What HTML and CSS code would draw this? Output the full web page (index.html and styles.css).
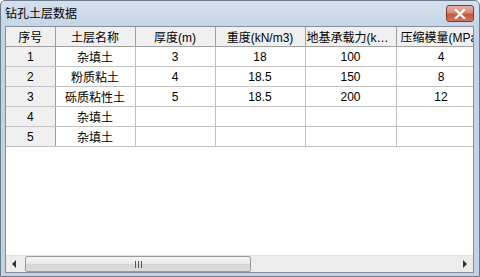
FILE: index.html
```
<!DOCTYPE html>
<html lang="zh-CN">
<head>
    <meta charset="UTF-8">
    <title>钻孔土层数据</title>
    <link rel="stylesheet" href="styles.css">
</head>
<body>
    <div class="window">
        <div class="titlebar">
            <span class="title">钻孔土层数据</span>
            <div class="close">
                <svg width="12" height="10" viewBox="0 0 12 10">
                    <path d="M2 1 L10 9 M10 1 L2 9" stroke="#fff" stroke-width="2.4" stroke-linecap="square"/>
                </svg>
            </div>
        </div>
        <div class="client">
            <div class="grid">
                <table>
                    <colgroup>
                        <col style="width:49px"><col style="width:80px"><col style="width:80px">
                        <col style="width:90px"><col style="width:91px"><col style="width:90px">
                    </colgroup>
                    <tr class="head">
                        <th>序号</th><th>土层名称</th><th>厚度(m)</th><th>重度(kN/m3)</th><th>地基承载力(kPa)</th><th class="clip">压缩模量(MPa)</th>
                    </tr>
                    <tr><td class="num">1</td><td>杂填土</td><td>3</td><td>18</td><td>100</td><td>4</td></tr>
                    <tr><td class="num">2</td><td>粉质粘土</td><td>4</td><td>18.5</td><td>150</td><td>8</td></tr>
                    <tr><td class="num">3</td><td>砾质粘性土</td><td>5</td><td>18.5</td><td>200</td><td>12</td></tr>
                    <tr><td class="num">4</td><td>杂填土</td><td></td><td></td><td></td><td></td></tr>
                    <tr><td class="num">5</td><td>杂填土</td><td></td><td></td><td></td><td></td></tr>
                </table>
            </div>
            <div class="hscroll">
                <div class="arrow left"></div>
                <div class="track">
                    <div class="thumb"><span class="grip"></span></div>
                </div>
                <div class="arrow right"></div>
            </div>
        </div>
    </div>
</body>
</html>
```

FILE: styles.css
```
html, body { margin: 0; padding: 0; }
body { width: 480px; height: 277px; overflow: hidden; font-family: "Liberation Sans", "Noto Sans CJK SC", sans-serif; font-size: 12px; color: #000; }

.window {
    width: 480px; height: 277px; box-sizing: border-box;
    border: 1px solid #6d7b8b; border-radius: 5px 5px 0 0;
    background: linear-gradient(#d3e0ee, #c4d4e6 30px, #c2d2e4);
    display: flex; flex-direction: column;
}
.titlebar { height: 25px; flex: none; display: flex; align-items: flex-start; padding-left: 4px; position: relative; }
.title { font-family: "Noto Sans CJK SC", sans-serif; font-size: 12px; line-height: 12px; margin-top: 6px; color: #000; }
.close {
    position: absolute; right: 5px; top: 4px; width: 28px; height: 17px; box-sizing: border-box;
    border: 1px solid #7a3a30; border-radius: 3px;
    background: linear-gradient(#e8b2a6, #d88a78 45%, #c5563f 55%, #cf7560);
    display: flex; align-items: center; justify-content: center;
}

.client {
    flex: 1; margin: 0 5px 3px 4px; border: 1px solid #838f9c; background: #fff;
    display: flex; flex-direction: column; overflow: hidden;
}
.grid { flex: 1; overflow: hidden; }
table { border-collapse: collapse; table-layout: fixed; width: 480px; }
th, td {
    height: 19px; padding: 0 1px; border: 1px solid #c2c2c2; border-top: none; border-left: none;
    text-align: center; white-space: nowrap; overflow: hidden; font-weight: normal;
    font-family: "Liberation Sans", "Noto Sans CJK SC", sans-serif; font-size: 12px;
}
th { background: #f0f0f0; border-color: #a0a0a0; text-overflow: ellipsis; }
th.clip { text-overflow: clip; text-align: left; padding-left: 4px; }
td.num { background: #f0f0f0; border-right-color: #a0a0a0; }

.hscroll { height: 16px; flex: none; display: flex; background: #ececec; border-top: 1px solid #e2e2e2; }
.arrow { width: 17px; position: relative; }
.arrow.left::after {
    content: ""; position: absolute; left: 6px; top: 4px;
    border-right: 4px solid #333; border-top: 4px solid transparent; border-bottom: 4px solid transparent;
}
.arrow.right::after {
    content: ""; position: absolute; right: 6px; top: 4px;
    border-left: 4px solid #333; border-top: 4px solid transparent; border-bottom: 4px solid transparent;
}
.track { flex: 1; display: flex; padding: 0 0 0 2px; }
.thumb {
    width: 226px; box-sizing: border-box; border: 1px solid #9a9a9a; border-radius: 2px;
    background: linear-gradient(#f4f4f4, #e8e8e8 50%, #d6d6d6 51%, #dcdcdc);
    display: flex; align-items: center; justify-content: center;
}
.grip { width: 7px; height: 7px; background: repeating-linear-gradient(90deg, #555 0 1px, transparent 1px 3px); }
```
